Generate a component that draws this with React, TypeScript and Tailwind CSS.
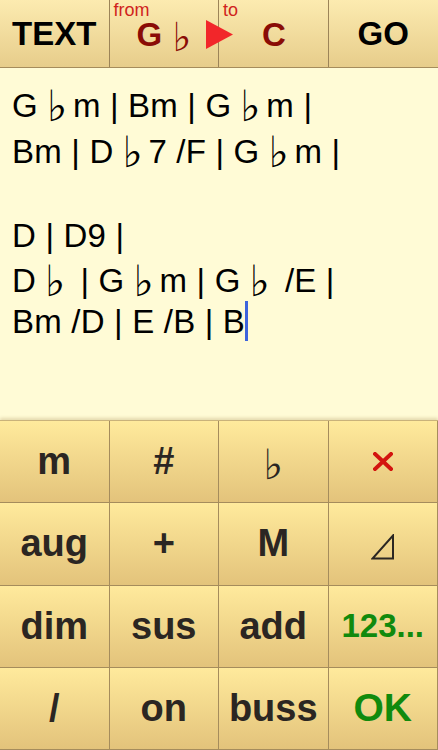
import React from "react"

const FONT = { fontFamily: '"Liberation Sans", Arial, "DejaVu Sans", sans-serif' }

function Flat({ className = "" }: { className?: string }) {
  return (
    <span
      className={"relative inline-block leading-[0px] font-normal " + className}
      style={{ fontFamily: '"DejaVu Sans", sans-serif' }}
    >
      ♭
    </span>
  )
}

// flat inside the chord text: fixed advance so spacing matches the app
function F() {
  return <Flat className="w-[35px] pl-[9px] text-[43px] top-[4px] text-black" />
}

function Key({ children, className = "" }: { children: React.ReactNode; className?: string }) {
  return (
    <div
      className={
        "flex items-center justify-center border-r border-b border-[#a58c5c] bg-gradient-to-b from-[#ffea9c] to-[#e3c37b] " +
        className
      }
    >
      {children}
    </div>
  )
}

export default function App() {
  return (
    <div className="w-[438px] h-[750px] flex flex-col bg-[#fffbd6] overflow-hidden" style={FONT}>
      {/* top bar */}
      <div className="relative grid grid-cols-4 h-[68px] border-b border-[#a58c5c] bg-gradient-to-b from-[#fcebb0] to-[#e7cd8b]">
        <div className="flex items-center justify-center border-r border-[#9c8458] text-[33px] font-bold text-black">
          TEXT
        </div>
        <div className="relative flex items-center border-r border-[#9c8458] pl-[27px] pt-[2px]">
          <span className="absolute left-[4px] top-[0px] text-[18px] leading-[20px] text-[#d0231c]">from</span>
          <span className="text-[33px] font-bold text-[#8a0c06]">G</span>
          <Flat className="text-[40px] text-[#8a0c06] ml-[10px] top-[2px]" />
        </div>
        <div className="relative flex items-center border-r border-[#9c8458] pl-[43px] pt-[2px]">
          <span className="absolute left-[4px] top-[0px] text-[18px] leading-[20px] text-[#d0231c]">to</span>
          <span className="text-[33px] font-bold text-[#8a0c06]">C</span>
        </div>
        <div className="flex items-center justify-center text-[33px] font-bold text-black">GO</div>
        <svg className="absolute left-[206px] top-[20px]" width="27" height="29" viewBox="0 0 27 29">
          <polygon points="0,0 27,14.5 0,29" fill="#f2262a" />
        </svg>
      </div>

      {/* text area */}
      <div className="flex-1 px-[12px] pt-[15px] text-[33px] tracking-[0.2px] leading-[46px] text-black whitespace-pre">
        <div className="h-[46px]">
          G<F />m | Bm | G<F />m |
        </div>
        <div className="h-[46px]">
          Bm | D<F />7 /F | G<F />m |
        </div>
        <div className="h-[38px]" />
        <div className="h-[45px]">D | D9 |</div>
        <div className="h-[41px]">
          D<F /> | G<F />m | G<F /> /E |
        </div>
        <div className="h-[46px]">
          Bm /D | E /B | B
          <span className="inline-block align-[-8px] w-[3px] h-[40px] bg-[#3d64dc]" />
        </div>
      </div>

      {/* keyboard */}
      <div className="grid grid-cols-4 grid-rows-4 h-[330px] border-t border-[#c9b27a] shadow-[0_-2px_3px_rgba(150,120,60,0.25)] text-[#2b2622] font-bold text-[38px]">
        <Key>m</Key>
        <Key>#</Key>
        <Key>
          <Flat className="text-[42px] text-[#2b2622] top-[3px]" />
        </Key>
        <Key>
          <svg width="20" height="19" viewBox="0 0 20 19">
            <path d="M2 2 L18 17 M18 2 L2 17" stroke="#d3140f" strokeWidth="4" strokeLinecap="square" />
          </svg>
        </Key>
        <Key>aug</Key>
        <Key>+</Key>
        <Key>M</Key>
        <Key>
          <svg width="24" height="26" viewBox="0 0 24 26" className="mt-[6px]">
            <path d="M22 1.5 L22 24.5 L1.5 24.5 Z" fill="none" stroke="#2b2622" strokeWidth="2" strokeLinejoin="miter" />
          </svg>
        </Key>
        <Key>dim</Key>
        <Key>sus</Key>
        <Key>add</Key>
        <Key className="text-[#118a0d] text-[33px]">123...</Key>
        <Key>/</Key>
        <Key>on</Key>
        <Key>buss</Key>
        <Key className="text-[#118a0d] text-[39px]">OK</Key>
      </div>
    </div>
  )
}
